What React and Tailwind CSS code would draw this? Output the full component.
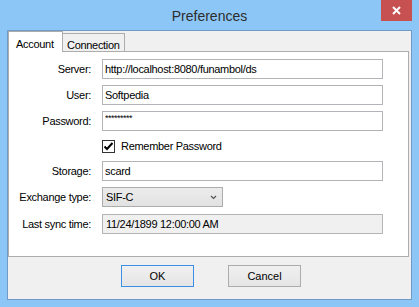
const font = { fontFamily: '"Liberation Sans", Arial, sans-serif' };

const Field = ({ label, children, className = "" }) => (
  <div className={`flex items-center h-[20px] ${className}`}>
    <div className="w-[83px] text-right pr-[1px] text-[11px] tracking-[-0.3px] text-black">{label}</div>
    <div className="ml-[10px] flex">{children}</div>
  </div>
);

const TextBox = ({ value, gray }) => (
  <div
    className={`w-[281px] h-[20px] border border-[#b2b4b8] flex items-center pl-[2px] text-[11px] tracking-[-0.3px] text-black ${
      gray ? "bg-[#f0f0f0] pl-[3px]" : "bg-white"
    }`}
  >
    {value}
  </div>
);

const Button = ({ label, primary }) => (
  <div
    className={`w-[73px] h-[22px] flex items-center justify-center text-[11px] text-black bg-gradient-to-b from-[#f0f0f0] to-[#e5e5e5] border ${
      primary ? "border-[#3c8fe6]" : "border-[#acacac]"
    }`}
  >
    {label}
  </div>
);

export default function App() {
  return (
    <div className="w-[419px] h-[307px] bg-[#8cc6f6] flex flex-col overflow-hidden" style={font}>
      {/* title bar */}
      <div className="grid grid-cols-[1fr_auto_1fr] h-[30px]">
        <div />
        <div className="pt-[8px] leading-[16px] text-[14px] text-[#2d2d2d]">Preferences</div>
        <div className="flex justify-end pr-[7px]">
          <div className="w-[31px] h-[21px] bg-[#c75050] flex items-center justify-center">
            <svg width="9" height="9" viewBox="0 0 9 9">
              <path d="M1 1 L8 8 M8 1 L1 8" stroke="white" strokeWidth="2" />
            </svg>
          </div>
        </div>
      </div>

      {/* client */}
      <div className="mx-[7px] h-[270px] border border-[#6f9bc6] bg-[#f0f0f0] flex flex-col">
        <div className="flex items-end h-[20px]">
          <div className="relative z-10 -mb-px h-[21px] w-[55px] bg-white border-t border-l border-r border-[#adadad] pl-[7px] pt-[4px] text-[11px] tracking-[-0.3px]">
            Account
          </div>
          <div className="h-[18px] w-[62px] border-t border-r border-[#adadad] pl-[4px] pt-[3px] text-[11px] tracking-[-0.3px]">
            Connection
          </div>
        </div>

        <div className="mr-[2px] h-[206px] bg-white border border-[#adadad] pt-[7px] flex flex-col gap-[6px]">
          <Field label="Server:">
            <TextBox value="http://localhost:8080/funambol/ds" />
          </Field>
          <Field label="User:">
            <TextBox value="Softpedia" />
          </Field>
          <Field label="Password:">
            <TextBox value={<span className="text-[9px] tracking-[-0.5px] -mt-[4px]">*********</span>} />
          </Field>
          <div className="flex items-center h-[18px] pl-[93px]">
            <div className="w-[13px] h-[13px] border border-[#333333] bg-white flex items-center justify-center">
              <svg width="11" height="11" viewBox="0 0 11 11">
                <path d="M1.5 5.5 L4 8 L9.5 2" stroke="black" strokeWidth="2" fill="none" />
              </svg>
            </div>
            <span className="ml-[6px] text-[11px] tracking-[-0.3px]">Remember Password</span>
          </div>
          <Field label="Storage:">
            <TextBox value="scard" />
          </Field>
          <Field label="Exchange type:">
            <div className="w-[121px] h-[20px] border border-[#acacac] bg-gradient-to-b from-[#ececec] to-[#e2e2e2] flex items-center justify-between pl-[3px] pr-[5px] text-[11px] tracking-[-0.3px]">
              <span>SIF-C</span>
              <svg width="7" height="5" viewBox="0 0 7 5">
                <path d="M1 1 L3.5 3.5 L6 1" stroke="#555" strokeWidth="1.2" fill="none" />
              </svg>
            </div>
          </Field>
          <Field label="Last sync time:" className="mt-[1px]">
            <TextBox value="11/24/1899 12:00:00 AM" gray />
          </Field>
        </div>

        <div className="flex justify-center gap-[34px] pt-[8px] pl-[3px]">
          <Button label="OK" primary />
          <Button label="Cancel" />
        </div>
      </div>
    </div>
  );
}
